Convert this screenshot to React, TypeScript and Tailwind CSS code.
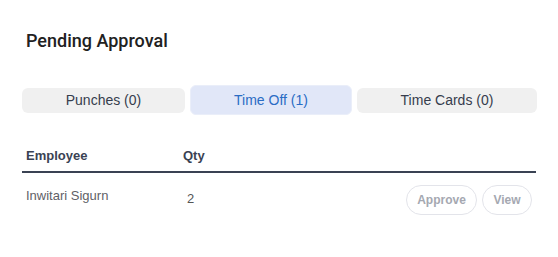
const SANS = "font-[family-name:'Liberation_Sans',Arial,sans-serif]";

export default function App() {
  return (
    <div className="w-[558px] h-[257px] bg-white px-[22px] font-[family-name:'Liberation_Sans',Arial,sans-serif]">
      {/* title */}
      <h1 className="pt-[29px] pl-[4px] text-[18px] leading-6 font-medium text-[#212121] font-[family-name:Roboto,sans-serif]">
        Pending Approval
      </h1>

      {/* tabs */}
      <div className="mt-[32px] flex items-center h-[30px]">
        <div className="shrink-0 w-[163px] h-[25px] rounded-[6px] bg-[#f0f0f0] flex items-center justify-center text-[14px] text-[#363d4d]">
          Punches (0)
        </div>
        <div className="shrink-0 ml-[5px] w-[162px] h-[30px] rounded-[6px] bg-[#e1e7f8] border border-[#eaeef9] flex items-center justify-center text-[14px] text-[#2a6cc4]">
          Time Off (1)
        </div>
        <div className="shrink-0 ml-[5px] w-[180px] h-[25px] rounded-[6px] bg-[#f0f0f0] flex items-center justify-center text-[14px] text-[#363d4d]">
          Time Cards (0)
        </div>
      </div>

      {/* table header */}
      <div className="mt-[33px] pb-[7px] flex border-b-2 border-[#3a4253] text-[13px] leading-4 font-bold text-[#3a4253]">
        <div className="w-[161px] pl-[4px]">Employee</div>
        <div>Qty</div>
      </div>

      {/* row */}
      <div className={`pt-[12px] flex items-start text-[13px] leading-4 ${SANS}`}>
        <div className="w-[161px] pl-[4px] mt-[3px] text-[#5f6167]">Inwitari Sigurn</div>
        <div className="pl-[4px] mt-[6px] text-[#555]">2</div>
        <div className="ml-auto pr-[4px] flex gap-[5px]">
          <button className="h-[30px] w-[71px] rounded-full border border-[#e3e4ea] text-[12px] font-bold text-[#a5a8b1]">
            Approve
          </button>
          <button className="h-[30px] w-[50px] rounded-full border border-[#e3e4ea] text-[12px] font-bold text-[#a5a8b1]">
            View
          </button>
        </div>
      </div>
    </div>
  );
}
